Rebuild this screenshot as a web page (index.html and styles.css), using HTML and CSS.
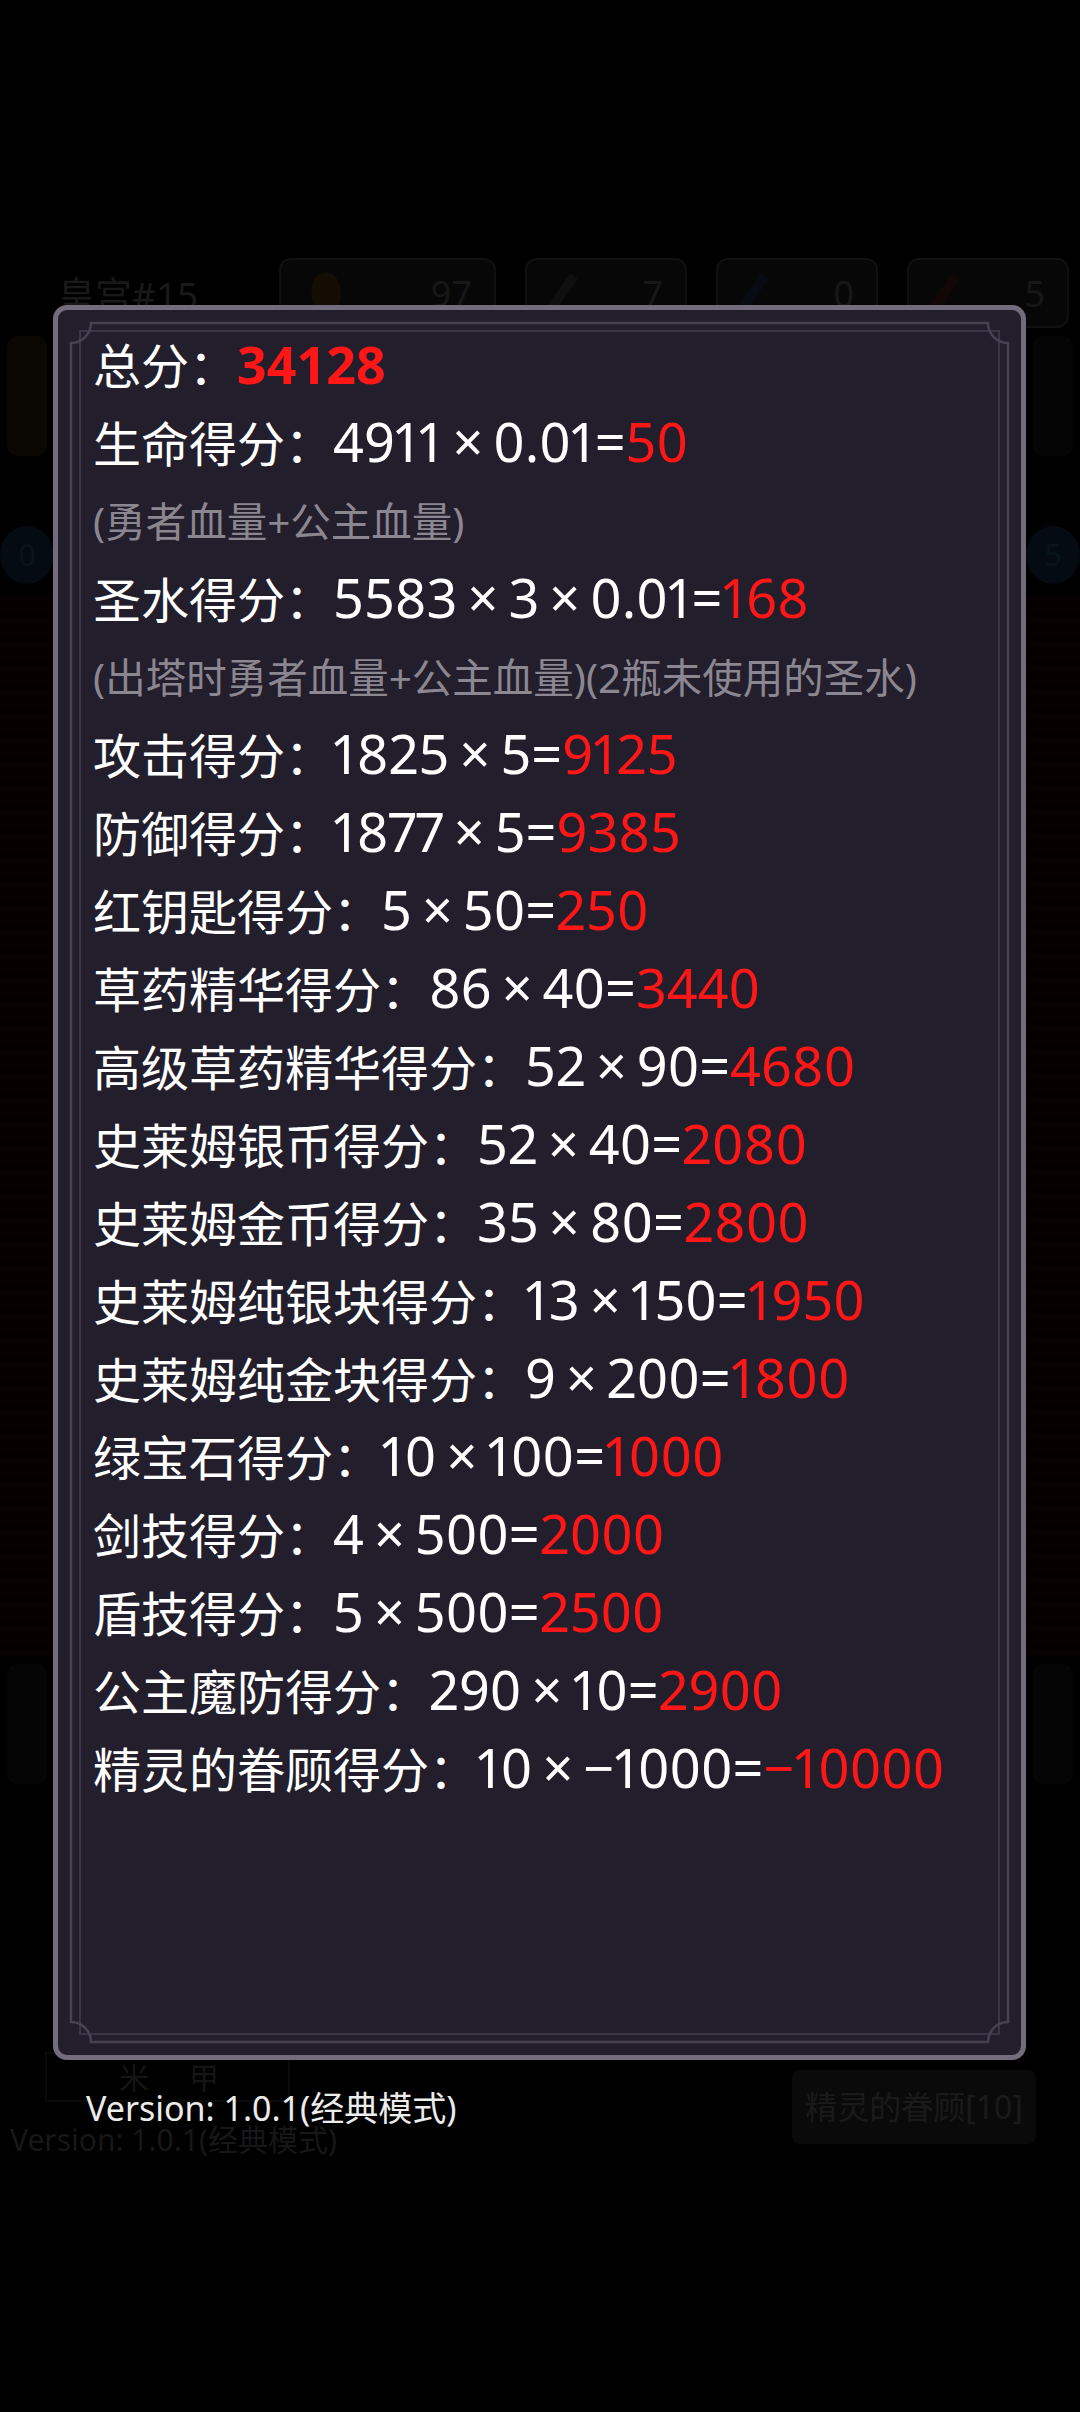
FILE: index.html
```html
<!DOCTYPE html>
<html lang="zh-CN">
<head>
    <meta charset="UTF-8">
    <meta name="viewport" content="width=device-width, initial-scale=1.0">
    <title>魔塔 - 得分</title>
    <link rel="stylesheet" href="styles.css">
</head>
<body>

    <div class="screen">
        <!-- game screen, dimmed behind the score dialog -->
        <div class="game">
            <div class="topbar">
                <div class="floor">皇宫#15</div>
                <div class="stat stat-gold"><span class="ico coin"></span><span class="num">97</span></div>
                <div class="stat stat-key"><span class="ico key yellow"></span><span class="num">7</span></div>
                <div class="stat stat-key"><span class="ico key blue"></span><span class="num">0</span></div>
                <div class="stat stat-key last"><span class="ico key red"></span><span class="num">5</span></div>
            </div>
            <div class="field">
                <div class="side">
                    <div class="side-box orange"></div>
                    <div class="orb">0</div>
                    <div class="floor-tiles"></div>
                    <div class="side-box"></div>
                </div>
                <div class="side">
                    <div class="side-box"></div>
                    <div class="orb">5</div>
                    <div class="floor-tiles"></div>
                    <div class="side-box"></div>
                </div>
            </div>
            <div class="bottombar">
                <div class="left-part">
                    <div class="equip"><span>米</span><span>甲</span></div>
                    <div class="ver-dim">Version: 1.0.1(经典模式)</div>
                </div>
                <div class="blessing-btn">精灵的眷顾[10]</div>
            </div>
        </div>

        <div class="overlay">
            <div class="dialog">
                <svg class="frame" width="963" height="1745" viewBox="0 0 963 1745">
                    <path d="M33 13 H930 A20 20 0 0 0 950 33 V1712 A20 20 0 0 0 930 1732 H33 A20 20 0 0 0 13 1712 V33 A20 20 0 0 0 33 13 Z" fill="none" stroke="#474152" stroke-width="2.5"/>
                </svg>
                <div class="rows">
                    <div class="row total">总分：<span class="val">34128</span></div>
                    <div class="row">生命得分：<span class="expr">4911<span class="x">×</span>0.01=<span class="val">50</span></span></div>
                    <div class="row note">(勇者血量+公主血量)</div>
                    <div class="row">圣水得分：<span class="expr">5583<span class="x">×</span>3<span class="x">×</span>0.01=<span class="val">168</span></span></div>
                    <div class="row note">(出塔时勇者血量+公主血量)(2瓶未使用的圣水)</div>
                    <div class="row">攻击得分：<span class="expr">1825<span class="x">×</span>5=<span class="val">9125</span></span></div>
                    <div class="row">防御得分：<span class="expr">1877<span class="x">×</span>5=<span class="val">9385</span></span></div>
                    <div class="row">红钥匙得分：<span class="expr">5<span class="x">×</span>50=<span class="val">250</span></span></div>
                    <div class="row">草药精华得分：<span class="expr">86<span class="x">×</span>40=<span class="val">3440</span></span></div>
                    <div class="row">高级草药精华得分：<span class="expr">52<span class="x">×</span>90=<span class="val">4680</span></span></div>
                    <div class="row">史莱姆银币得分：<span class="expr">52<span class="x">×</span>40=<span class="val">2080</span></span></div>
                    <div class="row">史莱姆金币得分：<span class="expr">35<span class="x">×</span>80=<span class="val">2800</span></span></div>
                    <div class="row">史莱姆纯银块得分：<span class="expr">13<span class="x">×</span>150=<span class="val">1950</span></span></div>
                    <div class="row">史莱姆纯金块得分：<span class="expr">9<span class="x">×</span>200=<span class="val">1800</span></span></div>
                    <div class="row">绿宝石得分：<span class="expr">10<span class="x">×</span>100=<span class="val">1000</span></span></div>
                    <div class="row">剑技得分：<span class="expr">4<span class="x">×</span>500=<span class="val">2000</span></span></div>
                    <div class="row">盾技得分：<span class="expr">5<span class="x">×</span>500=<span class="val">2500</span></span></div>
                    <div class="row">公主魔防得分：<span class="expr">290<span class="x">×</span>10=<span class="val">2900</span></span></div>
                    <div class="row">精灵的眷顾得分：<span class="expr">10<span class="x">×</span>−1000=<span class="val">−10000</span></span></div>
                </div>
            </div>
            <div class="version">Version: 1.0.1(经典模式)</div>
        </div>
    </div>

</body>
</html>
```

FILE: styles.css
```css
body {
    margin: 0;
    background: #000;
    font-family: "Noto Sans", "Noto Sans CJK SC", sans-serif;
}

.screen {
    position: relative;
    width: 1080px;
    height: 2412px;
    overflow: hidden;
    background: #000;
}

/* ---------- dimmed game screen ---------- */

.game {
    display: flex;
    flex-direction: column;
    height: 100%;
}

.topbar {
    display: flex;
    align-items: center;
    gap: 29px;
    height: 70px;
    margin-top: 258px;
    padding-left: 58px;
}

.floor {
    width: 192px;
    font-size: 37px;
    color: #191919;
}

.stat {
    display: flex;
    align-items: center;
    justify-content: space-between;
    box-sizing: border-box;
    width: 162px;
    height: 70px;
    padding: 0 22px 0 30px;
    border: 2px solid #101010;
    border-radius: 12px;
    background: #070707;
}

.stat-gold {
    width: 217px;
}

.stat .num {
    font-size: 36px;
    color: #171717;
}

.ico {
    display: block;
    width: 30px;
    height: 42px;
    border-radius: 50%;
}

.coin {
    background: #140d03;
}

.key {
    width: 10px;
    border-radius: 3px;
    transform: rotate(35deg);
}

.key.yellow { background: #0f0f0f; }
.key.blue { background: #080b14; }
.key.red { background: #120706; }

.field {
    display: flex;
    justify-content: space-between;
    flex: 1;
}

.side {
    display: flex;
    flex-direction: column;
    align-items: center;
    width: 54px;
}

.side-box {
    width: 40px;
    height: 120px;
    margin-top: 8px;
    border-radius: 10px;
    background: #050505;
}

.side-box.orange {
    background: #0b0702;
}

.orb {
    width: 54px;
    height: 58px;
    margin-top: 70px;
    border-radius: 50%;
    background: #040b12;
    color: #08141d;
    font-size: 30px;
    line-height: 58px;
    text-align: center;
}

.floor-tiles {
    width: 54px;
    height: 1060px;
    margin-top: 12px;
    background:
        repeating-linear-gradient(0deg, #070101 0 6px, #040000 6px 12px),
        #050000;
}

.bottombar {
    display: flex;
    justify-content: space-between;
    align-items: flex-start;
    height: 360px;
    padding: 0 44px 0 10px;
}

.left-part {
    display: flex;
    flex-direction: column;
}

.equip {
    display: flex;
    gap: 40px;
    width: 245px;
    height: 50px;
    margin-left: 35px;
    padding-left: 72px;
    box-sizing: border-box;
    border: 2px solid #0a0a0a;
    font-size: 30px;
    color: #151515;
}

.ver-dim {
    margin-top: 14px;
    font-size: 30px;
    color: #171717;
}

.blessing-btn {
    margin-top: 18px;
    width: 244px;
    height: 74px;
    border-radius: 8px;
    background: #0a0a0a;
    color: #1a1a1a;
    font-size: 32px;
    line-height: 74px;
    text-align: center;
}

/* ---------- score dialog ---------- */

.overlay {
    position: absolute;
    inset: 0;
    display: flex;
    flex-direction: column;
    padding: 305px 0 0 53px;
}

.dialog {
    position: relative;
    box-sizing: border-box;
    width: 973px;
    height: 1755px;
    padding: 17px 0 0 35px;
    border: 5px solid #736c7c;
    border-radius: 14px;
    background: #221e2c;
}

.dialog::before {
    content: "";
    position: absolute;
    top: 20px;
    left: 21px;
    right: 21px;
    bottom: 20px;
    border: 2px solid #3a3547;
}

.frame {
    position: absolute;
    top: 0;
    left: 0;
}

.rows {
    position: relative;
}

.row {
    height: 78px;
    font-size: 48px;
    line-height: 78px;
    color: #fff;
    white-space: nowrap;
}

.row.note {
    font-size: 40.5px;
    color: #8b8791;
}

.expr {
    font-size: 54px;
    line-height: 1;
    font-variant-numeric: proportional-nums;
}

.x {
    margin: 0 10px;
}

.val {
    color: #ff1616;
}

.total .val {
    font-size: 52px;
    line-height: 1;
    font-weight: 700;
}

.version {
    margin: 26px 0 0 33px;
    font-size: 34px;
    line-height: 44px;
    color: #ececec;
}
```
